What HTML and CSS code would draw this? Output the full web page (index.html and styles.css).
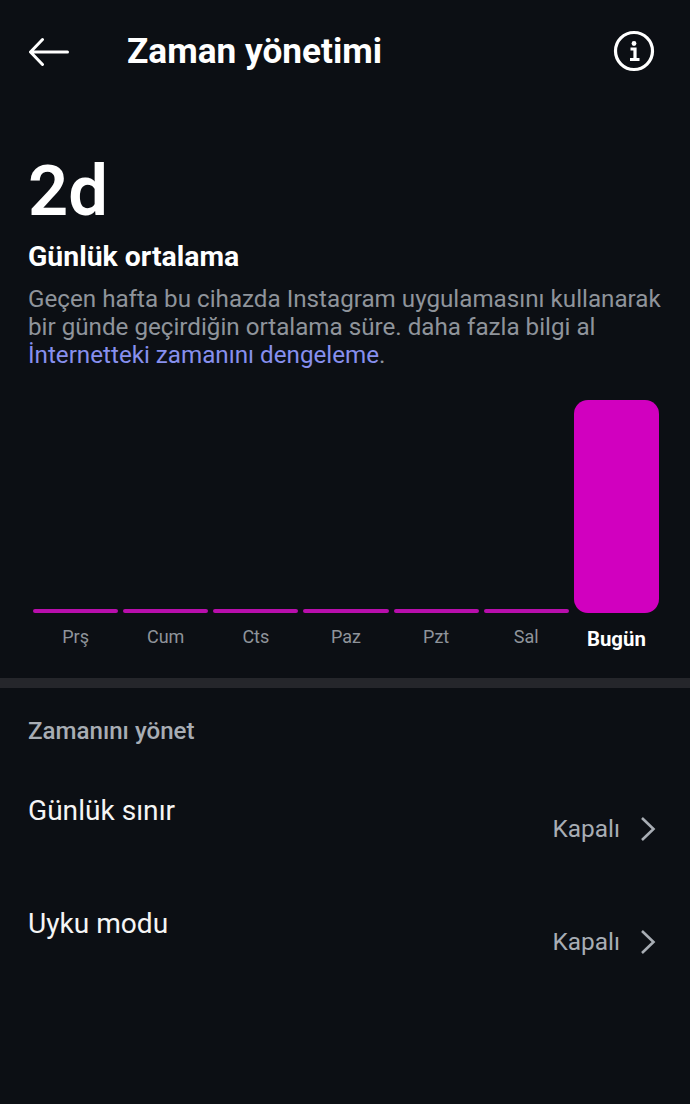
FILE: index.html
```html
<!DOCTYPE html>
<html lang="tr">
<head>
<meta charset="utf-8">
<title>Zaman yönetimi</title>
<link rel="stylesheet" href="styles.css">
</head>
<body>
<header class="topbar">
  <svg class="back" width="40" height="30" viewBox="0 0 40 30"><path d="M38.5 16H2M13.5 3.5L1.5 16l12 12.5" fill="none" stroke="#fff" stroke-width="3" stroke-linecap="round" stroke-linejoin="round"/></svg>
  <h1 class="title">Zaman yönetimi</h1>
  <svg class="info" width="42" height="42" viewBox="0 0 42 42"><circle cx="21" cy="21" r="18.5" fill="none" stroke="#fff" stroke-width="3.2"/><circle cx="21" cy="13.5" r="2.4" fill="#fff"/><path d="M17.5 19h4.5v10M17 29.5h9.5" fill="none" stroke="#fff" stroke-width="3.2"/></svg>
</header>
<section class="summary">
  <div class="big">2d</div>
  <h2 class="sub">Günlük ortalama</h2>
  <p class="desc">Geçen hafta bu cihazda Instagram uygulamasını kullanarak<br>bir günde geçirdiğin ortalama süre. daha fazla bilgi al<br><span class="link">İnternetteki zamanını dengeleme</span>.</p>
</section>
<section class="chart">
  <div class="col"><div class="bar"></div><span class="day">Prş</span></div>
  <div class="col"><div class="bar"></div><span class="day">Cum</span></div>
  <div class="col"><div class="bar"></div><span class="day">Cts</span></div>
  <div class="col"><div class="bar"></div><span class="day">Paz</span></div>
  <div class="col"><div class="bar"></div><span class="day">Pzt</span></div>
  <div class="col"><div class="bar"></div><span class="day">Sal</span></div>
  <div class="col"><div class="bar bar-today"></div><span class="day day-today">Bugün</span></div>
</section>
<div class="divider"></div>
<section class="manage">
  <h3 class="manage-title">Zamanını yönet</h3>
  <div class="row row-first">
    <span class="row-label">Günlük sınır</span>
    <span class="row-value">Kapalı<svg class="chev" width="16" height="26" viewBox="0 0 16 26"><path d="M2 2l11.5 11L2 24" fill="none" stroke="#a8adb4" stroke-width="2.6"/></svg></span>
  </div>
  <div class="row">
    <span class="row-label">Uyku modu</span>
    <span class="row-value">Kapalı<svg class="chev" width="16" height="26" viewBox="0 0 16 26"><path d="M2 2l11.5 11L2 24" fill="none" stroke="#a8adb4" stroke-width="2.6"/></svg></span>
  </div>
</section>
</body>
</html>
```
FILE: styles.css
```css
* { box-sizing: border-box; }
html, body { margin: 0; padding: 0; }
body {
  width: 690px;
  height: 1104px;
  overflow: hidden;
  background: #0c0f14;
  color: #fff;
  font-family: Roboto, "Noto Sans", sans-serif;
}
.topbar {
  display: flex;
  align-items: center;
  height: 104px;
  padding: 0 35px 2px 29px;
}
.back { flex: none; }
.title {
  flex: 1;
  margin: 0 0 0 58px;
  font-size: 35.2px;
  font-weight: 700;
  line-height: 40px;
}
.info { flex: none; }
.summary { padding: 45px 28px 0; }
.big {
  font-size: 70.5px;
  font-weight: 600;
  line-height: 84px;
}
.sub {
  margin: 6px 0 0;
  font-size: 28.4px;
  font-weight: 700;
  line-height: 36px;
}
.desc {
  margin: 10px 0 0;
  font-size: 24.2px;
  line-height: 28px;
  color: #8f949b;
  white-space: nowrap;
}
.link { color: #8790ee; }
.chart {
  display: flex;
  align-items: flex-start;
  gap: 5px;
  margin-top: 31px;
  padding: 0 31px 0 33px;
}
.col {
  flex: 1;
  height: 253px;
  display: flex;
  flex-direction: column;
  align-items: center;
  justify-content: flex-end;
}
.bar {
  width: 100%;
  height: 4px;
  border-radius: 2px;
  background: #b80eac;
}
.day {
  margin-top: 13px;
  height: 27px;
  font-size: 18px;
  line-height: 21px;
  color: #8f949b;
}
.bar-today {
  width: 100%;
  height: 213px;
  border-radius: 14px;
  background: #d100bf;
}
.day-today {
  font-size: 20.4px;
  line-height: 27px;
  font-weight: 700;
  color: #fff;
}
.divider {
  height: 10px;
  margin-top: 25px;
  background: #25262b;
}
.manage { padding: 0 34px 0 28px; }
.manage-title {
  margin: 27px 0 0;
  font-size: 24.1px;
  font-weight: 500;
  line-height: 32px;
  color: #a8adb4;
}
.row {
  display: flex;
  justify-content: space-between;
  align-items: flex-start;
  height: 113px;
}
.row-first { margin-top: 42px; }
.row-label {
  font-size: 28.1px;
  line-height: 44px;
  color: #f5f5f5;
}
.row-value {
  display: flex;
  align-items: center;
  gap: 20px;
  margin-top: 18px;
  font-size: 24.4px;
  line-height: 44px;
  color: #a8adb4;
}
.chev { flex: none; }
```
